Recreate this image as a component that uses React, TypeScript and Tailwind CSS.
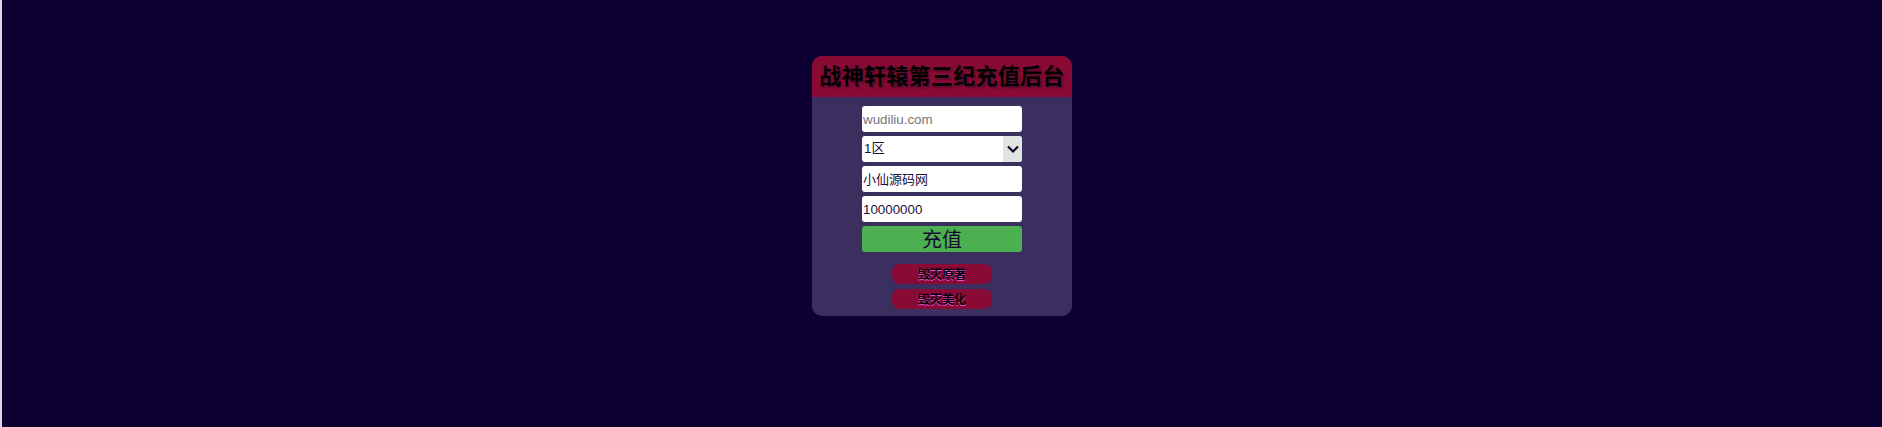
export default function App() {
  const inputClass =
    "h-[26px] w-[160px] rounded-[3px] bg-white pl-[1px] text-[13.33px] outline-none";
  const linkClass =
    "flex h-[20px] w-[100px] items-center justify-center rounded-[8px] bg-[#880a35] pt-[1px] text-[12px] font-bold text-black [text-shadow:0_1px_0_#f050d0]";

  return (
    <div
      className="h-[427px] bg-[#d8d6e2] pl-[2px]"
      style={{ fontFamily: '"Liberation Sans", "Noto Sans CJK SC", sans-serif' }}
    >
      <div className="flex h-full justify-center bg-[#0d0033] pt-[56px]">
        <div className="h-[260px] w-[260px] overflow-hidden rounded-[10px] bg-[#3a2f5f]">
          <h1 className="flex h-[41px] items-center justify-center bg-[#880a35] text-[22px] font-bold tracking-[0.3px] whitespace-nowrap text-black [text-shadow:2px_2px_2px_#5a0a30]">
            战神轩辕第三纪充值后台
          </h1>
          <form className="flex flex-col items-center gap-[4px] pt-[9px]">
            <input className={`${inputClass} text-[#757575]`} defaultValue="wudiliu.com" />
            <div className="flex h-[26px] w-[160px] items-stretch overflow-hidden rounded-[3px] bg-white text-[#1e0f3c]">
              <span className="flex flex-1 items-center pl-[2px] text-[13.33px]">1区</span>
              <span className="flex w-[19px] items-center justify-center bg-[#dfe5e0]">
                <svg width="14" height="14" viewBox="0 0 14 14" fill="none">
                  <path d="M2 4.5 7 9.5 12 4.5" stroke="#140a30" strokeWidth="2.2" />
                </svg>
              </span>
            </div>
            <input className={`${inputClass} pb-[2px] text-[13px] text-[#1e0f3c]`} defaultValue="小仙源码网" />
            <input className={`${inputClass} text-[#1e0f3c]`} defaultValue="10000000" />
            <button
              type="button"
              className="h-[26px] w-[160px] rounded-[3px] bg-[#4caf50] pt-[2px] text-[20px] leading-none text-[#140a30]"
            >
              充值
            </button>
          </form>
          <div className="mt-[12px] flex flex-col items-center gap-[5px]">
            <a className={linkClass}>毁灭原著</a>
            <a className={linkClass}>毁灭美化</a>
          </div>
        </div>
      </div>
    </div>
  );
}
